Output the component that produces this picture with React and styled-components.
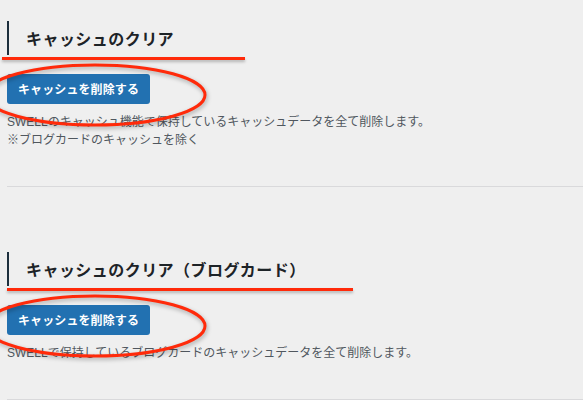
import styled, { createGlobalStyle } from "styled-components";

const GlobalStyle = createGlobalStyle`
  html, body {
    margin: 0;
    background: #efefef;
  }
`

const sections = [
    {
        title: "キャッシュのクリア",
        line: { left: -7, width: 243 },
        notes: [
            "SWELLのキャッシュ機能で保持しているキャッシュデータを全て削除します。",
            "※ブログカードのキャッシュを除く",
        ],
    },
    {
        title: "キャッシュのクリア（ブログカード）",
        line: { left: -2, width: 346 },
        notes: ["SWELLで保持しているブログカードのキャッシュデータを全て削除します。"],
    },
]

const RedCircle = () => (
    <CircleSvg width="240" height="75" viewBox="0 0 240 75">
        <ellipse cx="108" cy="36" rx="110" ry="30" fill="none" stroke="#ff2a0a" strokeWidth="3" />
    </CircleSvg>
)

const App = () => {
    return (
        <Page>
            <GlobalStyle />
            {sections.map((section) => (
                <Section key={section.title}>
                    <Heading>
                        {section.title}
                        <Underline left={section.line.left} width={section.line.width} />
                    </Heading>
                    <ButtonArea>
                        <ClearButton>キャッシュを削除する</ClearButton>
                        <RedCircle />
                    </ButtonArea>
                    <Description>
                        {section.notes.map((note) => (
                            <Note key={note}>{note}</Note>
                        ))}
                    </Description>
                </Section>
            ))}
        </Page>
    )
}

const Page = styled.div`
    padding: 21px 0 20px 7px;
    font-family: "Liberation Sans", "Noto Sans CJK JP", sans-serif;
    overflow: hidden;
`
const Section = styled.section`
    border-bottom: 1px solid #d9d9db;
    padding-bottom: 37px;
    & + & {
        margin-top: 65px;
    }
`
const Heading = styled.h2`
    position: relative;
    margin: 0;
    height: 34px;
    line-height: 34px;
    border-left: 2px solid #1d2f3d;
    padding-left: 17px;
    font-family: "Noto Sans CJK JP", sans-serif;
    font-size: 16px;
    font-weight: 700;
    letter-spacing: 0.45px;
    color: #1d2327;
`
const Underline = styled.span`
    position: absolute;
    top: 36px;
    left: ${props => props.left}px;
    width: ${props => props.width}px;
    height: 3px;
    background: #ff2a0a;
    box-shadow: 0 2px 3px rgba(0, 0, 0, 0.25);
`
const ButtonArea = styled.div`
    position: relative;
    display: flex;
    margin-top: 19px;
`
const ClearButton = styled.button`
    height: 30px;
    padding: 0 11px;
    border: none;
    border-radius: 3px;
    background: #2271b1;
    color: #ffffff;
    font-family: "Noto Sans CJK JP", sans-serif;
    font-size: 12px;
    font-weight: 600;
    line-height: 30px;
    letter-spacing: 0.1px;
`
const CircleSvg = styled.svg`
    position: absolute;
    left: -20px;
    top: -15px;
    overflow: visible;
    pointer-events: none;
    z-index: 2;
    filter: drop-shadow(1px 2px 2px rgba(0, 0, 0, 0.3));
`
const Description = styled.div`
    margin-top: 9px;
    font-size: 12px;
    line-height: 18px;
    color: #50575e;
`
const Note = styled.p`
    margin: 0;
`

export default App
